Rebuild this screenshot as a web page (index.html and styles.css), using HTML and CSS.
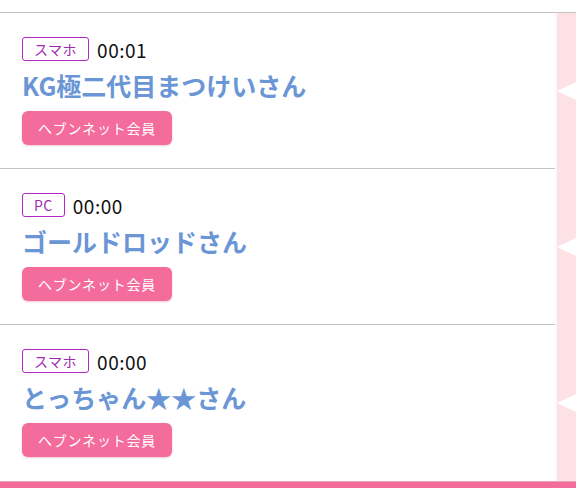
FILE: index.html
```html
<html>

<head>
    <title>ログイン履歴</title>
    <meta charset="utf-8">
    <link rel="stylesheet" href="styles.css">
</head>

<body>
    <div class="page">
        <div class="board">
            <div class="list">
                <div class="item">
                    <div class="meta">
                        <span class="device">スマホ</span>
                        <span class="time">00:01</span>
                    </div>
                    <div class="name">KG極二代目まつけいさん</div>
                    <a class="member">ヘブンネット会員</a>
                </div>
                <div class="item">
                    <div class="meta">
                        <span class="device">PC</span>
                        <span class="time">00:00</span>
                    </div>
                    <div class="name">ゴールドロッドさん</div>
                    <a class="member">ヘブンネット会員</a>
                </div>
                <div class="item last">
                    <div class="meta">
                        <span class="device">スマホ</span>
                        <span class="time">00:00</span>
                    </div>
                    <div class="name">とっちゃん★★さん</div>
                    <a class="member">ヘブンネット会員</a>
                </div>
            </div>
            <!-- side tabs of the slider -->
            <div class="side">
                <div class="tab"><span class="notch"></span></div>
                <div class="tab"><span class="notch"></span></div>
                <div class="tab"><span class="notch"></span></div>
            </div>
        </div>
        <div class="footer"></div>
    </div>
</body>

</html>
```

FILE: styles.css
```css
body {
    margin: 0;
    background-color: #ffffff;
    font-family: "Noto Sans CJK JP", "Noto Sans", sans-serif;
}

.page {
    padding-top: 12px;
}

.board {
    display: flex;
    border-top: 1px solid #c4c4c4;
}

.list {
    flex: 1;
}

.item {
    height: 156px;
    box-sizing: border-box;
    padding: 24px 22px 0;
    border-bottom: 1px solid #c4c4c4;
}

.item.last {
    border-bottom: none;
}

.meta {
    display: flex;
    align-items: center;
    gap: 8px;
    height: 24px;
}

.device {
    display: inline-flex;
    align-items: center;
    height: 24px;
    box-sizing: border-box;
    padding: 0 11px;
    border: 1.5px solid #b325c6;
    border-radius: 3px;
    color: #a22ab3;
    font-size: 14px;
    letter-spacing: 0.5px;
}

.time {
    font-size: 19px;
    letter-spacing: 0.5px;
    color: #111111;
}

.name {
    margin-top: 8px;
    font-size: 25px;
    line-height: 32px;
    font-weight: bold;
    color: #6a96d6;
}

.member {
    display: inline-flex;
    align-items: center;
    margin-top: 10px;
    height: 34px;
    padding: 0 16px;
    background-color: #f36c9c;
    border-radius: 6px;
    color: #ffffff;
    font-size: 14px;
    letter-spacing: 0.8px;
    box-shadow: 0 1px 2px rgba(200, 80, 120, 0.3);
}

.side {
    width: 19px;
    background-color: #fde1e5;
    border-left: 2px solid #f6fafa;
}

.tab {
    height: 156px;
    display: flex;
    align-items: center;
}

.notch {
    width: 0;
    height: 0;
    border-top: 9px solid transparent;
    border-bottom: 9px solid transparent;
    border-right: 19px solid #ffffff;
}

.footer {
    height: 7px;
    background-color: #f36c9c;
    border-top: 1px solid #e8a4ba;
}
```
